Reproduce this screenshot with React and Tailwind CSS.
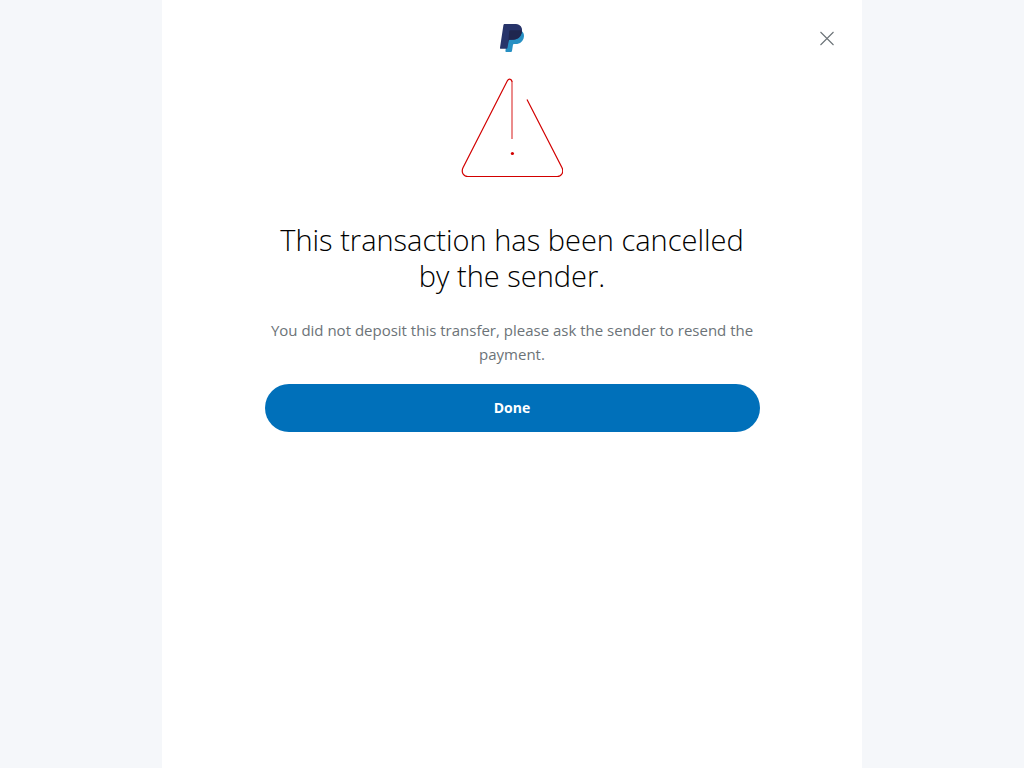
function PayPalLogo() {
  return (
    <svg className="h-7 w-6" viewBox="0 0 24 28" role="img" aria-label="PayPal">
      <path fill="#2790c3" d="M21.7 7.1C23.4 8.400 24.200 10.300 23.900 12.700C23.300 17.300 20.200 20 15.600 20H14.200C13.500 20 13 20.500 12.900 21.200L12 27.100C11.900 27.700 11.500 28 10.900 28H6.300C5.700 28 5.300 27.600 5.400 27L8.500 7.100Z" />
      <path fill="#27346a" d="M4.900 0H14.300C19.600 0 22.800 2.500 21.900 7.700C21 13.300 17.400 15.800 12.200 15.800H10C9.300 15.800 8.800 16.200 8.700 16.900L7.500 23.800C7.400 24.500 7 24.800 6.400 24.800H.8C.2 24.800-.1 24.400 0 23.800L3.400 1.300C3.500.5 4.100 0 4.900 0Z" />
      <path fill="#1f264f" d="M10.400 6.300H20.300C21 6.400 21.500 6.700 22 7.100C21.200 13.200 17.400 15.800 12.200 15.800H10C9.300 15.800 8.800 16.200 8.700 16.900L8.300 19L9.200 7.300C9.300 6.700 9.800 6.300 10.400 6.300Z" />
    </svg>
  );
}

function WarningIcon() {
  return (
    <svg className="size-[102px]" viewBox="0 -1 102 102" fill="none" aria-hidden="true">
      <path
        d="M51 4.800C51 2.200 47.900 1.200 46.500 3.600L2.100 90.500C-.1 95 2.300 99.500 6.800 99.500H96.200C100.700 99.500 103.100 95 100.900 90.500L66 22.500"
        stroke="#d20000"
        strokeWidth="1.200"
      />
      <path d="M51 4V62" stroke="#d20000" strokeOpacity=".45" strokeWidth="2" />
      <circle cx="51.400" cy="76.500" r="1.600" fill="#d20000" />
    </svg>
  );
}

export default function App() {
  return (
    <div className="min-h-screen bg-[#f5f7fa] font-['Open_Sans',sans-serif]">
      <main className="mx-auto min-h-screen max-w-[700px] bg-white">
        <header className="grid grid-cols-3 items-center px-6 pt-6">
          <div className="col-start-2 justify-self-center">
            <PayPalLogo />
          </div>
          <button type="button" aria-label="Close" className="flex size-6 cursor-pointer items-center justify-center justify-self-end">
            <svg className="size-4" viewBox="-2 -1.5 16 16" aria-hidden="true">
              <path d="M.5 .5L13.500 13.500M13.500 .5L.5 13.500" stroke="#6c7378" strokeWidth="1.100" />
            </svg>
          </button>
        </header>
        <section className="mx-auto flex max-w-[495px] flex-col items-center pt-6 text-center">
          <WarningIcon />
          <h1 className="mt-11 text-[29px] leading-9 font-light text-black">
            This transaction has been cancelled by the sender.
          </h1>
          <p className="mt-6 text-[15px] leading-6 text-[#6c7378]">
            You did not deposit this transfer, please ask the sender to resend the payment.
          </p>
          <button type="button" className="mt-[18px] h-12 w-full cursor-pointer rounded-full bg-[#0070ba] text-sm font-bold text-white">
            Done
          </button>
        </section>
      </main>
    </div>
  );
}
